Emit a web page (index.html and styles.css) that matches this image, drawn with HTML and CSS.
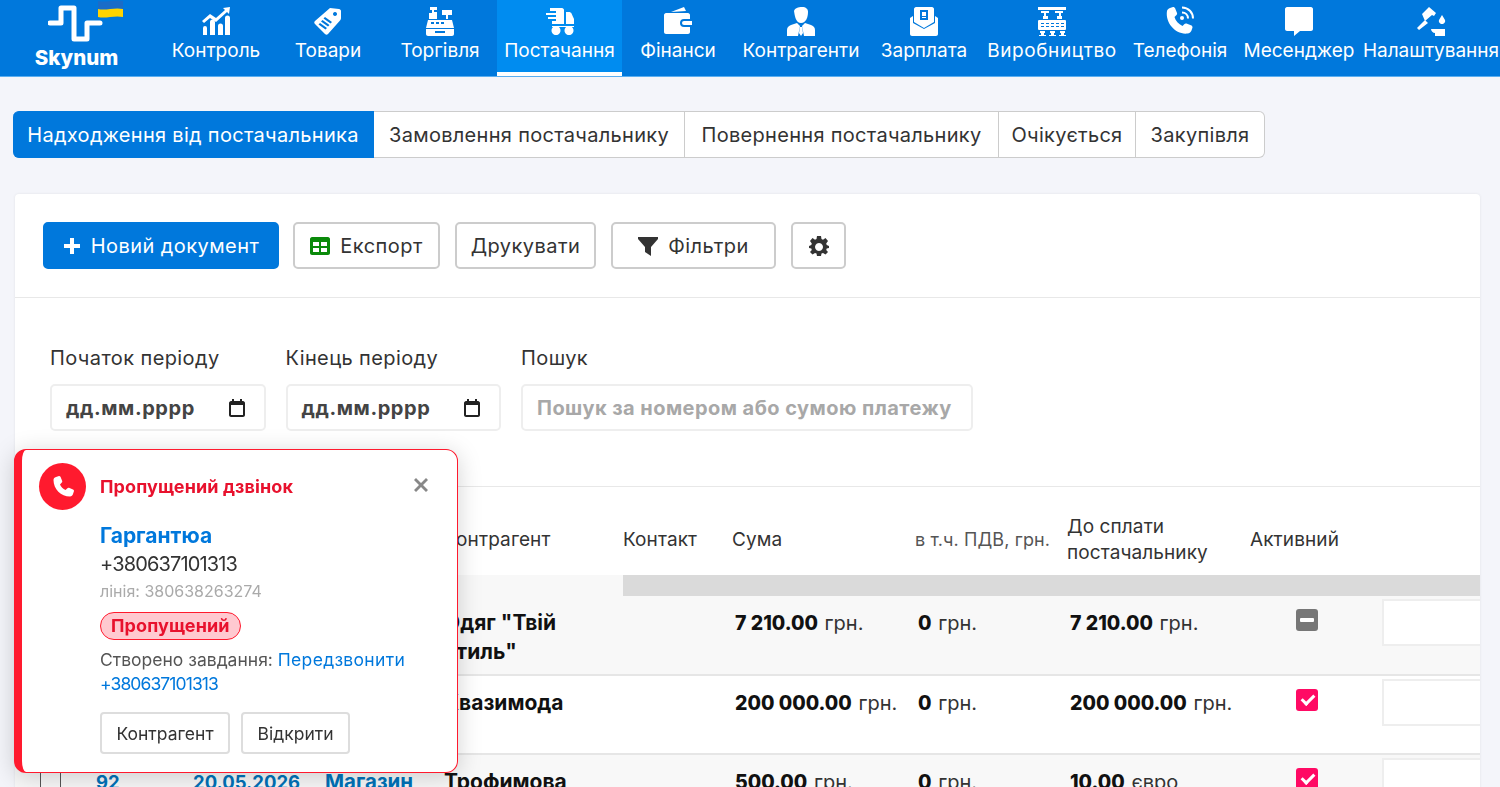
FILE: index.html
```html
<!DOCTYPE html>
<html lang="uk">
<head>
    <meta charset="UTF-8">
    <title>Skynum</title>
    <link rel="stylesheet" href="styles.css">
</head>
<body>
    <!-- top menu -->
    <nav class="topnav">
        <a class="logo">
            <svg class="logo-mark" viewBox="0 0 80 42">
                <path class="logo-line" d="M2 23H13V8H26V39H39V23H52"/>
                <path class="flag-blue" d="M50 1c8 2 16-2 25 0v8c-9-2-17 2-25 0z"/>
                <path class="flag-yellow" d="M50 9c8 2 16-2 25 0v8c-9-2-17 2-25 0z"/>
            </svg>
            <span class="logo-text">Skynum</span>
        </a>
        <a class="nav-item">
            <svg viewBox="0 0 30 30"><path d="M2 29v-7a2 2 0 0 1 4 0v7zM9 29V16a2.500 2.500 0 0 1 5 0v13zM17 29v-9a2.500 2.500 0 0 1 5 0v9zM24 29V12a2.500 2.500 0 0 1 5 0v17z"/><path d="M1 15l8-7 6 4 9-8-2-2 7-1-1 7-2-2-11 10-6-4-6 5z"/></svg>
            <span>Контроль</span>
        </a>
        <a class="nav-item">
            <svg viewBox="0 0 30 30"><path fill-rule="evenodd" d="M17 2l9 1c1 0 2 1 2 2v7c0 1-.5 2-1 2.500L15 28c-1 1-2 1-3 0L2 18c-1-1-1-2 0-3zM22 6a2 2 0 1 0 .01 0zM12 11l-1.500 1.500 7 5L19 16zM9.500 14L8 15.500l7 5 1.500-1.500zM7 17l-1.500 1.500 7 5L14 22z"/></svg>
            <span>Товари</span>
        </a>
        <a class="nav-item">
            <svg viewBox="0 0 30 30"><path fill-rule="evenodd" d="M1 23h28v5c0 1-1 2-2 2H3c-1 0-2-1-2-2zM10 25v2h10v-2zM3 14h24l2 8H1zM6 16v2h3v-2zM11 16v2h3v-2zM16 16v2h3v-2z"/><path d="M5 1h7v3H9v2h3v7H4V7h3V4H5zM17 4h10v5h-4v4h-2V9h-4z"/></svg>
            <span>Торгівля</span>
        </a>
        <a class="nav-item is-active">
            <svg viewBox="0 0 30 30"><path d="M5 2h12c1 0 2 1 2 2v14H7v-3h4v-2H3v-2h8V9H1V7h10V5H5z"/><path d="M21 6h3c1 0 2 .5 2.500 1.500L29 13v5h-8z"/><path d="M7 20h22v1H7z"/><path fill-rule="evenodd" d="M11 20a4.500 4.500 0 1 0 .01 0zM24 20a4.500 4.500 0 1 0 .01 0z"/></svg>
            <span>Постачання</span>
        </a>
        <a class="nav-item">
            <svg viewBox="0 0 30 30"><path d="M8 6l13-5 2 4z"/><path fill-rule="evenodd" d="M3 7h22c1 0 2 1 2 2v4h-6a4 4 0 0 0 0 8h6v5c0 1-1 2-2 2H3c-1 0-2-1-2-2V9c0-1 1-2 2-2zM21 15h8v4h-8a2 2 0 0 1 0-4z"/></svg>
            <span>Фінанси</span>
        </a>
        <a class="nav-item">
            <svg viewBox="0 0 30 30"><path d="M8 5c1-3 4-4 8-4s6 2 6 5c0 5-2 11-7 11S9 11 8 5z"/><path d="M1 30v-6c0-3 2-4 4-5l6-2 3 3-2 10zM29 30v-6c0-3-2-4-4-5l-6-2-3 3 2 10zM14 21h2l1 6-2 3-2-3z"/></svg>
            <span>Контрагенти</span>
        </a>
        <a class="nav-item">
            <svg viewBox="0 0 30 30"><path fill-rule="evenodd" d="M7 1h16c1 0 2 1 2 2v13l-10 6-10-6V3c0-1 1-2 2-2zM11 4v10h8V4zM13 6h4v4h-4zM13 11h4v1h-4z"/><path d="M1 12l3-2v7l11 6 11-6v-7l3 2v16c0 1-1 2-2 2H3c-1 0-2-1-2-2z"/></svg>
            <span>Зарплата</span>
        </a>
        <a class="nav-item">
            <svg viewBox="0 0 30 30"><path fill-rule="evenodd" d="M1 1h28v3H1zM4 5h8v2H9v3h2v3H6v-3h1V7H4zM18 5h8v2h-2v3h1v3h-5v-3h2V7h-4zM2 14h26c1 0 1 1 1 1v8c0 1-1 1-1 1H2c-1 0-1-1-1-1v-8s0-1 1-1zM4 17v1h3v-1zM9 17v1h3v-1zM14 17v1h3v-1zM19 17v1h3v-1zM24 17v1h3v-1zM4 20v1h3v-1zM9 20v1h3v-1zM14 20v1h3v-1zM19 20v1h3v-1zM24 20v1h3v-1z"/><path d="M3 25h5v2H7v2h2v1H2v-1h2v-2H3zM13 25h5v2h-1v2h2v1h-7v-1h2v-2h-1zM23 25h5v2h-1v2h2v1h-7v-1h2v-2h-1z"/></svg>
            <span class="nav-wide">Виробництво</span>
        </a>
        <a class="nav-item">
            <svg viewBox="0 0 30 30"><path d="M5 2l3-1c1 0 1.500.5 2 1l2 5c.3 1 0 1.500-.5 2l-2 2c1 4 4 7 8 9l2-2c.5-.5 1-.8 2-.5l5 2c.5.300 1 1 1 2l-1 3c-.5 1.500-2 3-4 3C11 29 0 17 2 5c.3-1.500 1.500-2.500 3-3z"/><circle cx="17" cy="12" r="2"/><path class="nav-stroke" d="M17 6.500c3.500 0 6 2.500 6 6M17 1.500c6.500 0 11 5 11 11"/></svg>
            <span>Телефонія</span>
        </a>
        <a class="nav-item">
            <svg viewBox="0 0 30 30"><path d="M3 1h24c1 0 2 1 2 2v20c0 1-1 2-2 2H16l-6 5v-5H3c-1 0-2-1-2-2V3c0-1 1-2 2-2z"/></svg>
            <span>Месенджер</span>
        </a>
        <a class="nav-item">
            <svg viewBox="0 0 30 30"><path d="M6 8l7-7 7 6-2 3-2-1-7 6zM9 14l3 3-9 7-2-2z"/><path d="M26 9l3 5c.7 2-1 4-3 4s-3.700-2-3-4z"/><path d="M15 23h14v7H19v-3c-2 0-4-2-4-4z"/></svg>
            <span>Налаштування</span>
        </a>
    </nav>

    <!-- section tabs -->
    <div class="tabs">
        <a class="tab is-active tab-w1">Надходження від постачальника</a>
        <a class="tab tab-w2">Замовлення постачальнику</a>
        <a class="tab tab-w3">Повернення постачальнику</a>
        <a class="tab tab-w4">Очікується</a>
        <a class="tab tab-w5">Закупівля</a>
    </div>

    <div class="card">
        <div class="toolbar">
            <button class="btn btn-primary btn-new">
                <svg class="btn-icon" viewBox="0 0 18 18"><path d="M7 1h4v6h6v4h-6v6H7v-6H1V7h6z"/></svg>
                Новий документ
            </button>
            <button class="btn btn-export">
                <svg class="btn-icon icon-green" viewBox="0 0 20 18"><path fill-rule="evenodd" d="M2 0h16c1 0 2 1 2 2v14c0 1-1 2-2 2H2c-1 0-2-1-2-2V2c0-1 1-2 2-2zM3 5v4h6V5zM11 5v4h6V5zM3 11v4h6v-4zM11 11v4h6v-4z"/></svg>
                Експорт
            </button>
            <button class="btn btn-print">Друкувати</button>
            <button class="btn btn-filter">
                <svg class="btn-icon icon-dark" viewBox="0 0 20 20"><path d="M0 1h20v2l-7 8v9l-6-4v-5L0 3z"/></svg>
                Фільтри
            </button>
            <button class="btn btn-gear">
                <svg class="btn-icon icon-dark" viewBox="0 0 20 20"><path fill-rule="evenodd" d="M8 0h4l.5 3 1.500.7L16.500 2 19 5l-1.800 2.500.5 1.500L20 10v2l-2.300.6-.5 1.500L19 16l-2.500 2.500L14 17l-1.500.6L12 20H8l-.5-2.400L6 17l-2.500 1.500L1 16l1.800-1.900-.5-1.500L0 12v-2l2.300-1 .5-1.500L1 5l2.500-3L6 3.700 7.500 3zM10 7a4 4 0 1 0 .01 0z"/></svg>
            </button>
        </div>

        <div class="filters">
            <div class="field field-date">
                <label>Початок періоду</label>
                <div class="date-input">
                    дд.мм.рррр
                    <svg viewBox="0 0 16 18"><path fill-rule="evenodd" d="M3 0h2v2h6V0h2v2h1c1 0 2 1 2 2v12c0 1-1 2-2 2H2c-1 0-2-1-2-2V4c0-1 1-2 2-2h1zM2 6v10h12V6z"/></svg>
                </div>
            </div>
            <div class="field field-date">
                <label>Кінець періоду</label>
                <div class="date-input">
                    дд.мм.рррр
                    <svg viewBox="0 0 16 18"><path fill-rule="evenodd" d="M3 0h2v2h6V0h2v2h1c1 0 2 1 2 2v12c0 1-1 2-2 2H2c-1 0-2-1-2-2V4c0-1 1-2 2-2h1zM2 6v10h12V6z"/></svg>
                </div>
            </div>
            <div class="field field-search">
                <label>Пошук</label>
                <input class="search-input" type="text" placeholder="Пошук за номером або сумою платежу">
            </div>
        </div>

        <table class="docs">
            <colgroup>
                <col class="c-check"><col class="c-num"><col class="c-date"><col class="c-shop"><col class="c-agent">
                <col class="c-contact"><col class="c-sum"><col class="c-vat"><col class="c-pay"><col class="c-active"><col class="c-note">
            </colgroup>
            <thead>
                <tr>
                    <th></th><th></th><th></th><th></th>
                    <th>Контрагент</th><th class="th-contact">Контакт</th><th>Сума</th>
                    <th class="th-small">в т.ч. ПДВ, грн.</th>
                    <th>До сплати постачальнику</th>
                    <th>Активний</th><th></th>
                </tr>
                <tr class="filter-row">
                    <td colspan="5" class="filter-light"></td>
                    <td colspan="6"></td>
                </tr>
            </thead>
            <tbody>
                <tr class="row-alt">
                    <td></td><td></td><td></td><td></td>
                    <td class="cell-agent"><b>Одяг "Твій стиль"</b></td><td></td>
                    <td class="cell-sum"><b>7 210.00</b> <span>грн.</span></td>
                    <td class="cell-sum"><b>0</b> <span>грн.</span></td>
                    <td class="cell-sum"><b>7 210.00</b> <span>грн.</span></td>
                    <td class="cell-sum"><i class="flag flag-off"></i></td>
                    <td><div class="note"></div></td>
                </tr>
                <tr>
                    <td></td><td></td><td></td><td></td>
                    <td class="cell-agent"><b>Квазимода</b></td><td></td>
                    <td class="cell-sum"><b>200 000.00</b> <span>грн.</span></td>
                    <td class="cell-sum"><b>0</b> <span>грн.</span></td>
                    <td class="cell-sum"><b>200 000.00</b> <span>грн.</span></td>
                    <td class="cell-sum"><i class="flag flag-on"></i></td>
                    <td><div class="note"></div></td>
                </tr>
                <tr class="row-alt">
                    <td><i class="row-check"></i></td>
                    <td><a class="cell-link">92</a></td>
                    <td><a class="cell-link">20.05.2026</a></td>
                    <td><a class="cell-link cell-shop">Магазин</a></td>
                    <td class="cell-agent"><b>Трофимова</b></td><td></td>
                    <td class="cell-sum"><b>500.00</b> <span>грн.</span></td>
                    <td class="cell-sum"><b>0</b> <span>грн.</span></td>
                    <td class="cell-sum"><b>10.00</b> <span>євро</span></td>
                    <td class="cell-sum"><i class="flag flag-on"></i></td>
                    <td><div class="note"></div></td>
                </tr>
            </tbody>
        </table>
    </div>

    <!-- missed call popup -->
    <div class="call-popup">
        <div class="call-head">
            <span class="call-icon">
                <svg viewBox="0 0 24 24"><path d="M5 2l3-1c.8 0 1.300.4 1.600 1l1.600 4c.2.700 0 1.200-.4 1.600L9 9.500c1 2.500 3 4.500 5.500 5.500l1.900-1.800c.4-.4.900-.6 1.600-.4l4 1.600c.6.300 1 .8 1 1.600l-1 3c-.4 1.500-1.500 2.500-3 2.500C10 21.500 2.500 14 2.500 5 2.500 3.500 3.500 2.400 5 2z"/></svg>
            </span>
            <span class="call-title">Пропущений дзвінок</span>
            <svg class="call-close" viewBox="0 0 14 14"><path d="M2 0l5 5 5-5 2 2-5 5 5 5-2 2-5-5-5 5-2-2 5-5-5-5z"/></svg>
        </div>
        <div class="call-body">
            <a class="call-name">Гаргантюа</a>
            <div class="call-phone">+380637101313</div>
            <div class="call-line">лінія: 380638263274</div>
            <span class="call-badge">Пропущений</span>
            <div class="call-task">
                <div>Створено завдання: <a>Передзвонити</a></div>
                <a class="task-phone">+380637101313</a>
            </div>
            <div class="call-actions">
                <button class="call-btn call-btn-agent">Контрагент</button>
                <button class="call-btn call-btn-open">Відкрити</button>
            </div>
        </div>
    </div>
</body>
</html>
```

FILE: styles.css
```css
:root {
    --blue: #0078dc;
    --blue-light: #008cf0;
    --red: #ff1a2e;
    --text: #333;
    --border: #ccc;
}

html, body {
    height: 100%;
    overflow: hidden;
}

body {
    margin: 0;
    background-color: #f4f5fa;
    color: var(--text);
    font-family: 'Inter', 'Noto Sans', sans-serif;
    font-size: 18px;
}

/* top menu */
.topnav {
    display: grid;
    grid-template-columns: 159px 114px 110px 114px 125px 112px 134px 112px 144px 112px 126px 138px;
    height: 76px;
    background-color: var(--blue);
    border-bottom: 1px solid #5aaef0;
    box-sizing: content-box;
}

.logo {
    display: flex;
    flex-direction: column;
    align-items: center;
}

.logo-mark {
    display: block;
    width: 80px;
    height: 42px;
    margin-left: 16px;
}

.logo-line {
    fill: none;
    stroke: #fff;
    stroke-width: 5;
    stroke-linejoin: round;
    stroke-linecap: round;
}

.flag-blue { fill: #1a6cc8; }
.flag-yellow { fill: #ffd400; }

.logo-text {
    color: #fff;
    font-weight: 800;
    font-size: 20.500px;
    line-height: 24px;
    margin-top: 4px;
    margin-right: 6px;
}

.nav-item {
    display: flex;
    flex-direction: column;
    align-items: center;
    color: #fff;
    font-size: 19px;
    line-height: 24px;
    padding-top: 6px;
    white-space: nowrap;
}

.nav-item svg {
    width: 30px;
    height: 30px;
    fill: #fff;
    margin-bottom: 3px;
}

.nav-item .nav-stroke {
    fill: none;
    stroke: #fff;
    stroke-width: 2;
}

.nav-wide {
    letter-spacing: 0.6px;
}

.nav-item.is-active {
    background-color: var(--blue-light);
    box-shadow: inset 0 -4px 0 #fff;
}

/* tabs */
.tabs {
    display: flex;
    margin: 34px 0 0 13px;
}

.tab {
    box-sizing: border-box;
    height: 47px;
    line-height: 47px;
    text-align: center;
    background-color: #fff;
    border: 1px solid var(--border);
    border-left: none;
    font-size: 20px;
    letter-spacing: 0.3px;
    white-space: nowrap;
}

.tab-w1 { width: 361px; }
.tab-w2 { width: 311px; }
.tab-w3 { width: 314px; }
.tab-w4 { width: 137px; }
.tab-w5 { width: 129px; border-radius: 0 6px 6px 0; }

.tab.is-active {
    background-color: var(--blue);
    border-color: var(--blue);
    color: #fff;
    border-radius: 6px 0 0 6px;
}

/* main card */
.card {
    width: 1465px;
    margin: 36px 0 0 15px;
    background-color: #fff;
    border-radius: 4px 4px 0 0;
    box-shadow: 0 0 3px rgba(0,0,0,0.08);
}

.toolbar {
    display: flex;
    gap: 15px;
    padding: 28px;
    border-bottom: 1px solid #e8e8e8;
}

.btn {
    display: flex;
    align-items: center;
    justify-content: center;
    gap: 10px;
    box-sizing: border-box;
    height: 47px;
    background-color: #fff;
    border: 2px solid #ccc;
    border-radius: 5px;
    color: var(--text);
    font-family: inherit;
    font-size: 20px;
    letter-spacing: 0.45px;
    padding: 0;
}

.btn-primary {
    background-color: var(--blue);
    border-color: var(--blue);
    color: #fff;
}

.btn-new { width: 236px; margin-right: -1px; }
.btn-export { width: 147px; }
.btn-print { width: 141px; }
.btn-filter { width: 165px; }
.btn-gear { width: 55px; }

.btn-icon {
    width: 18px;
    height: 18px;
    fill: #fff;
}

.icon-green { fill: #0a8a0a; width: 20px; }
.icon-dark { fill: #333; width: 20px; height: 20px; }

/* filters */
.filters {
    display: flex;
    gap: 20px;
    height: 189px;
    box-sizing: border-box;
    padding: 47px 35px 0;
    border-bottom: 1px solid #e8e8e8;
}

.field label {
    display: block;
    font-size: 20px;
    letter-spacing: 0.4px;
    line-height: 26px;
    margin-bottom: 13px;
}

.field-date { width: 215.500px; }
.field-search { width: 452px; }

.date-input, .search-input {
    box-sizing: border-box;
    height: 47px;
    border: 2px solid #eee;
    border-radius: 5px;
    font-size: 20px;
    font-weight: 700;
    font-family: inherit;
}

.date-input {
    display: flex;
    align-items: center;
    justify-content: space-between;
    padding: 0 19px 0 14px;
    color: #444;
    letter-spacing: 0.6px;
}

.date-input svg {
    width: 16px;
    height: 18px;
    fill: #222;
}

.search-input {
    width: 100%;
    padding: 0 14px;
    outline: none;
    color: var(--text);
    letter-spacing: 0.45px;
}

.search-input::placeholder {
    color: #a8a8a8;
}

/* table */
.docs {
    width: 1465px;
    table-layout: fixed;
    border-collapse: collapse;
}

.c-check { width: 70px; }
.c-num { width: 97px; }
.c-date { width: 132px; }
.c-shop { width: 119px; }
.c-agent { width: 190px; }
.c-contact { width: 98px; }
.c-sum { width: 183px; }
.c-vat { width: 152px; }
.c-pay { width: 183px; }
.c-active { width: 132px; }
.c-note { width: 109px; }

.docs th {
    box-sizing: border-box;
    height: 88px;
    padding: 18px 11px 0;
    font-weight: 400;
    font-size: 19px;
    letter-spacing: 0.1px;
    line-height: 26px;
    text-align: left;
}

.docs .th-contact {
    padding-left: 0;
}

.docs .th-small {
    font-size: 18px;
    color: #555;
    white-space: nowrap;
}

.filter-row td {
    height: 21px;
    padding: 0;
    background-color: #dadada;
}

.filter-row .filter-light {
    background-color: #f8f8f8;
}

.docs tbody tr {
    height: 79px;
    border-bottom: 2px solid #e6e6e6;
}

.docs tbody td {
    vertical-align: top;
    padding: 13px 11px 0;
    line-height: 28px;
}

.docs tbody .cell-sum {
    padding-left: 14px;
    padding-right: 0;
    font-size: 20px;
    white-space: nowrap;
}

.cell-sum b {
    font-size: 19.500px;
    font-weight: 800;
    color: #111;
    margin-right: 1px;
}

.cell-agent b {
    font-size: 21px;
    font-weight: 700;
    color: #111;
}

.docs tbody td:last-child {
    padding: 3px 0 0 11px;
}

.row-alt {
    background-color: #f8f8f8;
}

.note {
    height: 47px;
    background-color: #fff;
    border: 2px solid #eee;
    border-right: none;
    box-sizing: border-box;
}

.flag {
    display: block;
    position: relative;
    width: 22px;
    height: 22px;
    border-radius: 3px;
    margin: 0 0 0 43px;
}

.flag-off { background-color: #777; }
.flag-on { background-color: #ff0a64; }

.flag-off::after {
    content: "";
    position: absolute;
    left: 4px;
    top: 9px;
    width: 14px;
    height: 4px;
    background-color: #fff;
    border-radius: 1px;
}

.flag-on::after {
    content: "";
    position: absolute;
    left: 8px;
    top: 3px;
    width: 5px;
    height: 10px;
    border: solid #fff;
    border-width: 0 3px 3px 0;
    transform: rotate(45deg);
}

.row-check {
    display: block;
    width: 19px;
    height: 19px;
    border: 1px solid #555;
    margin-left: 14px;
    margin-top: 2px;
}

.cell-link {
    color: #0072b8;
    font-size: 18.500px;
    font-weight: 700;
}

.cell-shop {
    font-size: 20.500px;
}

/* missed call popup */
.call-popup {
    position: fixed;
    left: 14px;
    top: 449px;
    width: 444px;
    height: 324px;
    box-sizing: border-box;
    padding: 13px 20px 0 17px;
    background-color: #fff;
    border: 1px solid var(--red);
    border-left-width: 8px;
    border-radius: 12px;
    box-shadow: 0 4px 24px rgba(0,0,0,0.18);
}

.call-head {
    display: flex;
    align-items: center;
    gap: 14px;
}

.call-icon {
    display: flex;
    align-items: center;
    justify-content: center;
    width: 47px;
    height: 47px;
    border-radius: 50%;
    background-color: var(--red);
}

.call-icon svg {
    width: 24px;
    height: 24px;
    fill: #fff;
}

.call-title {
    flex: 1;
    color: #e8112d;
    font-size: 18px;
    letter-spacing: 0.1px;
    font-weight: 700;
}

.call-close {
    width: 14px;
    height: 14px;
    fill: #888;
    margin: -3px 9px 0 0;
}

.call-body {
    padding: 13px 0 0 61px;
}

.call-name {
    display: block;
    color: var(--blue);
    font-size: 21px;
    font-weight: 700;
    line-height: 26px;
}

.call-phone {
    font-size: 20px;
    line-height: 30px;
    letter-spacing: -0.85px;
}

.call-line {
    color: #aaa;
    font-size: 16px;
    line-height: 24px;
}

.call-badge {
    display: inline-block;
    box-sizing: border-box;
    height: 28px;
    line-height: 25px;
    margin-top: 9px;
    padding: 0 10px;
    background-color: #ffc9d0;
    border: 1px solid var(--red);
    border-radius: 14px;
    color: #e8112d;
    font-size: 18px;
    letter-spacing: 0.1px;
    font-weight: 700;
}

.call-task {
    margin-top: 8px;
    font-size: 17.500px;
    line-height: 24px;
    color: #555;
}

.call-task a {
    color: var(--blue);
    letter-spacing: 0.3px;
}

.call-task .task-phone {
    display: block;
    letter-spacing: -0.9px;
}

.call-actions {
    display: flex;
    gap: 11px;
    margin-top: 16px;
}

.call-btn {
    height: 42px;
    background-color: #fff;
    border: 2px solid #ddd;
    border-radius: 4px;
    color: var(--text);
    font-family: inherit;
    font-size: 17.500px;
    padding: 0;
}

.call-btn-agent { width: 130px; }
.call-btn-open { width: 109px; }
```
